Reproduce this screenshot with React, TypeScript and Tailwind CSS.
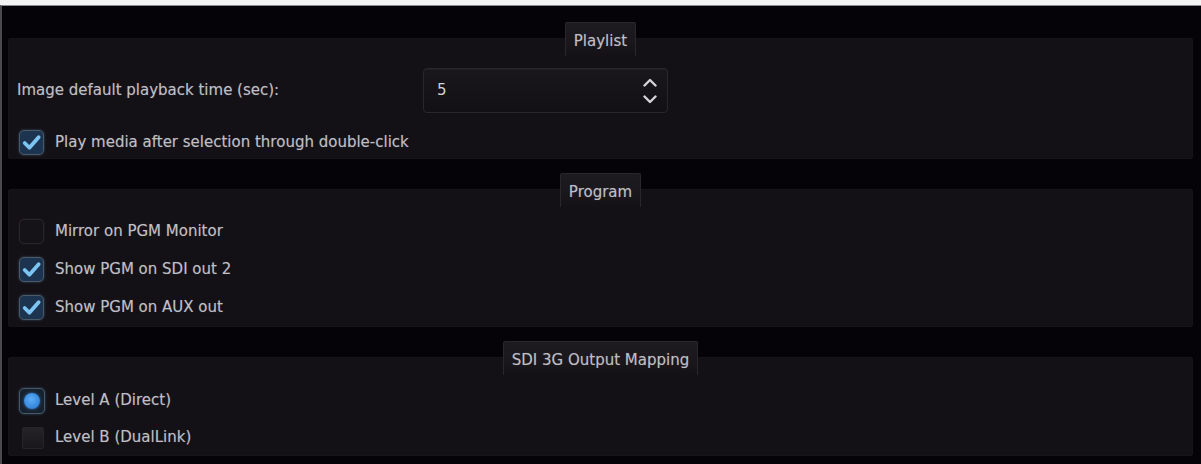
import React from "react";

const font = { fontFamily: '"DejaVu Sans", "Liberation Sans", sans-serif' };

function Tab({ label }: { label: string }) {
  return (
    <div className="relative z-10 -mb-[18px] h-[34px] px-[8px] flex items-start pt-[8px] rounded-t-[2px] border border-b-0 border-[#29272d] bg-[linear-gradient(to_bottom,#1d1b20_0%,#1a181d_55%,#141116_100%)] text-[15px] leading-[20px] text-[#bfbec4] [text-shadow:0_0_1px_rgba(200,200,210,0.35)]">
      {label}
    </div>
  );
}

function Checked() {
  return (
    <div className="w-[25px] h-[25px] rounded-[5px] border border-[#4a5a68] bg-[#1c3450] shadow-[0_0_3px_rgba(90,140,180,0.45)] flex items-center justify-center">
      <svg width="21" height="21" viewBox="0 0 20 20">
        <path d="M3.5 10.5 L8 15 L16.8 5" fill="none" stroke="#7cc4f2" strokeWidth="3.6" strokeLinecap="round" strokeLinejoin="round" />
      </svg>
    </div>
  );
}

function Unchecked() {
  return <div className="w-[25px] h-[25px] rounded-[5px] border border-[#29252e] bg-[#151218] shadow-[0_0_2px_rgba(60,50,70,0.5)]" />;
}

function RadioOn() {
  return (
    <div className="w-[26px] h-[26px] rounded-[5px] border border-[#44586a] bg-[#17222f] shadow-[0_0_3px_rgba(90,140,180,0.45)] flex items-center justify-center">
      <div className="w-[16px] h-[16px] rounded-full bg-[radial-gradient(circle_at_45%_40%,#5aaef5_0%,#3a8ae0_60%,#2a6cb8_100%)] shadow-[0_0_3px_rgba(70,150,240,0.7)]" />
    </div>
  );
}

function RadioOff() {
  return <div className="ml-[3px] w-[22px] h-[22px] rounded-[2px] border border-[#262429] bg-[linear-gradient(to_bottom,#252327,#19171b)]" />;
}

function Row({ box, label, h }: { box: React.ReactNode; label: string; h: string }) {
  return (
    <div className={`flex items-center ${h}`}>
      <div className="w-[38px] pl-[2px] flex items-center">{box}</div>
      <span className="text-[15px] text-[#bfbec4] [text-shadow:0_0_1px_rgba(200,200,210,0.35)]">{label}</span>
    </div>
  );
}

export default function App() {
  return (
    <div className="w-[1201px] h-[464px] bg-[#f3f3f3] pt-[5px] overflow-hidden" style={font}>
      <div className="h-[459px] bg-[#050307] border-t border-t-[#8c8c8c] border-l-2 border-l-[#4a4a4d] pl-[6px] pr-[8px] pt-[16px] flex flex-col gap-[14px]">
        {/* Playlist */}
        <section className="flex flex-col items-center">
          <Tab label="Playlist" />
          <div className="self-stretch h-[121px] bg-[#141116] border border-[#171419] rounded-[2px] pl-[8px] pt-[29px]">
            <div className="flex items-center h-[45px]">
              <span className="w-[406px] text-[15px] text-[#bfbec4] [text-shadow:0_0_1px_rgba(200,200,210,0.35)]">
                Image default playback time (sec):
              </span>
              <div className="w-[245px] h-[45px] rounded-[4px] border border-[#29272d] bg-[linear-gradient(to_bottom,#19171b,#121014)] shadow-[inset_0_1px_0_rgba(255,255,255,0.03)] flex items-center justify-between pl-[13px] pr-[10px]">
                <span className="text-[15px] text-[#d2d2d6]">5</span>
                <svg width="14" height="28" viewBox="0 0 14 28">
                  <path d="M1.5 8.5 L7 3 L12.5 8.5" fill="none" stroke="#d4d4d8" strokeWidth="2.4" strokeLinecap="round" strokeLinejoin="round" />
                  <path d="M1.5 19.5 L7 25 L12.5 19.5" fill="none" stroke="#d4d4d8" strokeWidth="2.4" strokeLinecap="round" strokeLinejoin="round" />
                </svg>
              </div>
            </div>
            <div className="mt-[12px]">
              <Row box={<Checked />} label="Play media after selection through double-click" h="h-[34px]" />
            </div>
          </div>
        </section>

        {/* Program */}
        <section className="flex flex-col items-center">
          <Tab label="Program" />
          <div className="self-stretch h-[138px] bg-[#141116] border border-[#171419] rounded-[2px] pl-[8px] pt-[22px]">
            <Row box={<Unchecked />} label="Mirror on PGM Monitor" h="h-[38px]" />
            <Row box={<Checked />} label="Show PGM on SDI out 2" h="h-[38px]" />
            <Row box={<Checked />} label="Show PGM on AUX out" h="h-[38px]" />
          </div>
        </section>

        {/* SDI */}
        <section className="flex flex-col items-center">
          <Tab label="SDI 3G Output Mapping" />
          <div className="self-stretch h-[99px] bg-[#141116] border border-[#171419] rounded-[2px] pl-[8px] pt-[24px]">
            <Row box={<RadioOn />} label="Level A (Direct)" h="h-[37px]" />
            <Row box={<RadioOff />} label="Level B (DualLink)" h="h-[37px]" />
          </div>
        </section>
      </div>
    </div>
  );
}
